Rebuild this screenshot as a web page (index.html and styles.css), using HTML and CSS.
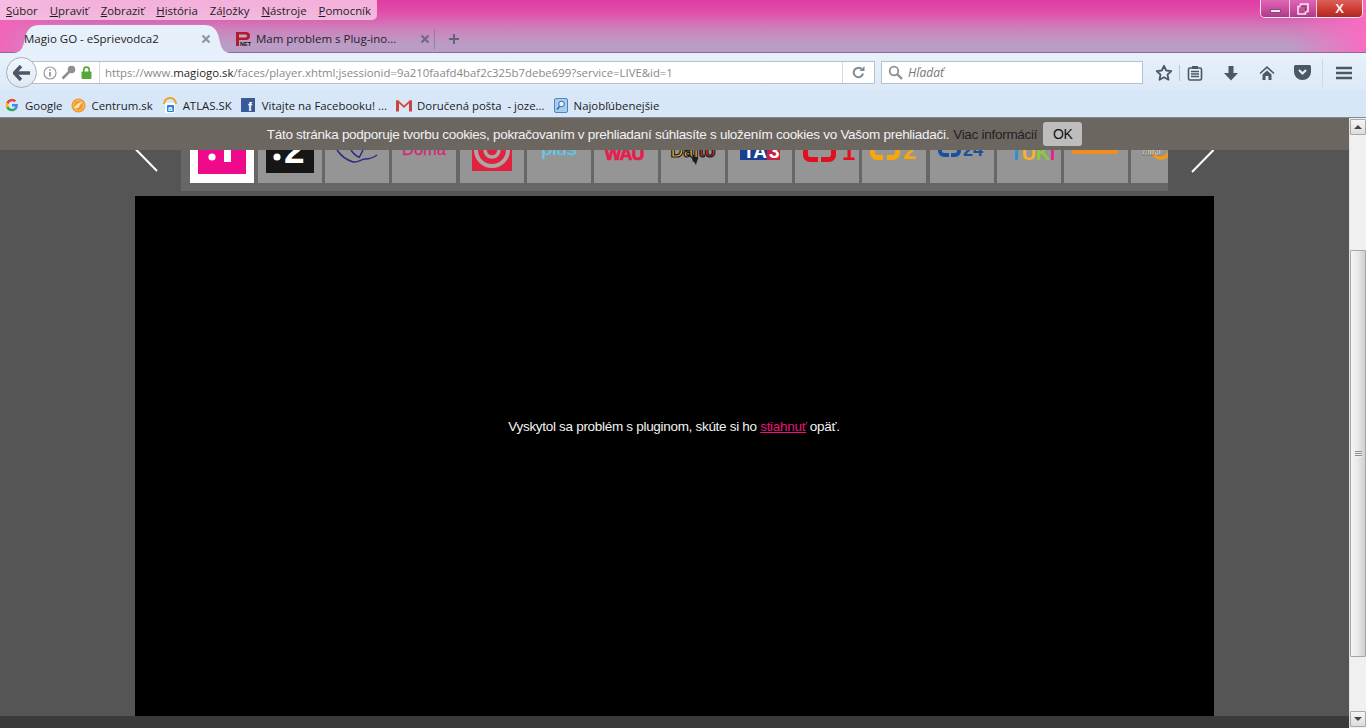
FILE: index.html
```html
<!DOCTYPE html>
<html lang="sk">
<head>
<meta charset="utf-8">
<title>Magio GO - eSprievodca2</title>
<link rel="stylesheet" href="styles.css">
</head>
<body>
<div class="app">
  <header class="chrome">
    <div class="titlebar">
      <div class="menu-row">
        <nav class="menubar">
          <span><u>S</u>úbor</span><span><u>U</u>praviť</span><span><u>Z</u>obraziť</span><span><u>H</u>istória</span><span>Zá<u>l</u>ožky</span><span><u>N</u>ástroje</span><span><u>P</u>omocník</span>
        </nav>
        <div class="winctl">
          <div class="wbtn wmin"><i></i></div>
          <div class="wbtn wmax"><svg width="12" height="12" viewBox="0 0 12 12"><path d="M3.5 1h7.5v7.5H8.5V11H1V3.500h2.500z" fill="none" stroke="#f4e6f0" stroke-width="1.600"/><path d="M3.500 3.500h5v5" fill="none" stroke="#7a3a62"/></svg></div>
          <div class="wbtn wclose">X</div>
        </div>
      </div>
      <div class="tabs">
        <div class="tab tab-active">
          <svg class="tab-shape" width="216" height="28" viewBox="0 0 216 28" preserveAspectRatio="none"><path d="M0 28C8 27 9 22 11 13 13 4 17 0 26 0H190C199 0 203 4 205 13 207 22 208 27 216 28Z" fill="#e6f0fb"/></svg>
          <span class="tab-title">Magio GO - eSprievodca2</span>
          <svg class="tab-x" width="10" height="10" viewBox="0 0 10 10"><path d="M1.500 1.500l7 7M8.500 1.500l-7 7" stroke="#8a97a4" stroke-width="2.200"/></svg>
        </div>
        <div class="tab tab-idle">
          <svg width="16" height="16" viewBox="0 0 16 16"><path d="M1 1h10a4 4 0 0 1 0 8H4v6H1z" fill="#b01c2e"/><path d="M4 3.500h6.500a1.500 1.500 0 0 1 0 3H4z" fill="#c9a2c4"/><text x="5" y="15" class="pnet">NET</text></svg>
          <span class="tab-title">Mam problem s Plug-ino...</span>
          <svg class="tab-x" width="10" height="10" viewBox="0 0 10 10"><path d="M1.500 1.500l7 7M8.500 1.500l-7 7" stroke="#6f6a80" stroke-width="2.200"/></svg>
        </div>
        <span class="tab-sep"></span>
        <svg class="tab-plus" width="12" height="12" viewBox="0 0 12 12"><path d="M6 1v10M1 6h10" stroke="#5c6674" stroke-width="2"/></svg>
      </div>
    </div>

    <div class="navbar">
      <div class="back"><svg width="18" height="16" viewBox="0 0 18 16"><path d="M8 1L1.500 8 8 15M2 8h15" fill="none" stroke="#4c5866" stroke-width="3.400"/></svg></div>
      <div class="urlbar">
        <svg class="u-info" width="14" height="14" viewBox="0 0 14 14"><circle cx="7" cy="7" r="6" fill="none" stroke="#9a9a9a" stroke-width="1.200"/><path d="M7 6v4.500M7 3.200v1.600" stroke="#8a8a8a" stroke-width="1.600"/></svg>
        <svg class="u-key" width="15" height="15" viewBox="0 0 15 15"><circle cx="10.500" cy="4.500" r="3.800" fill="#8f8f8f"/><path d="M8 7L1.500 13.500" stroke="#8f8f8f" stroke-width="2.600"/></svg>
        <svg class="u-lock" width="11" height="13" viewBox="0 0 11 13"><path d="M2.800 6V3.800a2.700 2.700 0 0 1 5.400 0V6" fill="none" stroke="#57a639" stroke-width="1.600"/><rect x="0.500" y="5.500" width="10" height="7.500" rx="1" fill="#57a639"/></svg>
        <span class="u-sep"></span>
        <span class="url">https://www.<b>magiogo.sk</b>/faces/player.xhtml;jsessionid=9a210faafd4baf2c325b7debe699?service=LIVE&amp;id=1</span>
        <span class="u-sep u-sep2"></span>
        <svg class="u-reload" width="13" height="13" viewBox="0 0 13 13"><path d="M11 7.500A4.700 4.700 0 1 1 9.500 3" fill="none" stroke="#7d8994" stroke-width="2"/><path d="M7.500 5h5V0z" fill="#7d8994"/></svg>
      </div>
      <div class="searchbar">
        <svg width="15" height="15" viewBox="0 0 15 15"><circle cx="6" cy="6" r="4.300" fill="none" stroke="#8a8f96" stroke-width="1.800"/><path d="M9 9l5 5" stroke="#8a8f96" stroke-width="2.400"/></svg>
        <span>Hľadať</span>
      </div>
      <div class="tools">
        <svg class="t-star" width="18" height="18" viewBox="0 0 18 18"><path d="M9 1.800l2.200 4.700 5.100.6-3.800 3.500 1 5.100L9 13.200l-4.500 2.500 1-5.100L1.700 7.100l5.100-.6z" fill="none" stroke="#4c5866" stroke-width="1.800" stroke-linejoin="round"/></svg>
        <span class="t-sep"></span>
        <svg class="t-clip" width="16" height="16" viewBox="0 0 16 16"><path d="M5 1h6v3H5z" fill="#4c5866"/><rect x="1.500" y="3" width="13" height="12" rx="1.500" fill="none" stroke="#4c5866" stroke-width="1.600"/><path d="M4 6.500h8M4 9h8M4 11.500h8" stroke="#4c5866" stroke-width="1.400"/></svg>
        <svg class="t-down" width="16" height="16" viewBox="0 0 16 16"><path d="M5.500 1h5v7h4.500L8 15.500 1 8h4.500z" fill="#4c5866"/></svg>
        <svg class="t-home" width="16" height="16" viewBox="0 0 16 16"><path d="M8 1L.500 8l1 1L8 3.200 14.500 9l1-1z" fill="#4c5866"/><path d="M3.500 9.500L8 5.500l4.500 4V15H9.500v-4h-3v4h-3z" fill="#4c5866"/></svg>
        <svg class="t-pocket" width="17" height="15" viewBox="0 0 17 15"><path d="M1.500 0h14A1.500 1.500 0 0 1 17 1.500V7A8.500 8 0 0 1 0 7V1.500A1.500 1.500 0 0 1 1.500 0z" fill="#4c5866"/><path d="M5 5l3.500 3.500L12 5" fill="none" stroke="#e3eefa" stroke-width="2.200"/></svg>
        <span class="t-sep t-sep2"></span>
        <svg class="t-burger" width="18" height="14" viewBox="0 0 18 14"><path d="M1 2h16M1 7h16M1 12h16" stroke="#4c5866" stroke-width="2.400"/></svg>
      </div>
    </div>

    <div class="bookmarks">
      <span class="bm bm-g"><svg width="14" height="14" viewBox="0 0 14 14"><path d="M12.800 7.200c0-.5 0-.9-.1-1.300H7v2.500h3.300a2.800 2.800 0 0 1-1.200 1.800v1.500h2a6 6 0 0 0 1.700-4.500z" fill="#4285f4"/><path d="M7 13.200c1.700 0 3-.6 4.100-1.500l-2-1.500c-.6.400-1.300.6-2.100.6a3.700 3.700 0 0 1-3.500-2.500H1.400v1.600A6.200 6.200 0 0 0 7 13.200z" fill="#34a853"/><path d="M3.500 8.300a3.700 3.700 0 0 1 0-2.400V4.300H1.400a6.200 6.200 0 0 0 0 5.600z" fill="#fbbc05"/><path d="M7 3.300c.9 0 1.700.3 2.400 1l1.800-1.800A6.200 6.200 0 0 0 1.400 4.300l2.100 1.600A3.700 3.700 0 0 1 7 3.300z" fill="#ea4335"/></svg>Google</span>
      <span class="bm bm-c"><svg width="15" height="15" viewBox="0 0 15 15"><circle cx="7.500" cy="7.500" r="7" fill="#ef9a2a"/><circle cx="7.500" cy="7.500" r="5" fill="none" stroke="#f9c67a"/><path d="M3 10c2-4 5-6 9-6-2 1-3 3-4 5-1.500 1.500-3 1.500-5 1z" fill="#fde3b5"/></svg>Centrum.sk</span>
      <span class="bm bm-a"><svg width="16" height="16" viewBox="0 0 16 16"><path d="M2 7a6 6 0 0 1 12 0" fill="none" stroke="#f0a020" stroke-width="2"/><rect x="3" y="6" width="10" height="10" rx="1" fill="#fff"/><rect x="5" y="8" width="7" height="7" rx="1" fill="#2a7fd4"/><text x="6" y="14" class="atl">a</text></svg>ATLAS.SK</span>
      <span class="bm bm-f"><svg width="14" height="14" viewBox="0 0 14 14"><rect width="14" height="14" fill="#3b5998"/><text x="7" y="13" class="fbf">f</text></svg>Vitajte na Facebooku! ...</span>
      <span class="bm bm-m"><svg width="16" height="13" viewBox="0 0 16 13"><path d="M0 1.500h3v11H0zM13 1.500h3v11h-3z" fill="#c9463a"/><path d="M0 1.500h2.500L8 6.500l5.500-5H16L8 9z" fill="#d8493c"/></svg>Doručená pošta&nbsp; - joze...</span>
      <span class="bm bm-s"><svg width="14" height="15" viewBox="0 0 14 15"><rect x=".5" y=".5" width="13" height="14" rx="1.500" fill="#a9cdec" stroke="#4d86bd"/><circle cx="7.500" cy="6" r="2.800" fill="#e7f2fb" stroke="#2f6ba6"/><path d="M5.500 8.500L3 11.500" stroke="#2f6ba6" stroke-width="1.600"/></svg>Najobľúbenejšie</span>
    </div>
  </header>

  <div class="page">
    <main class="viewport">
      <div class="cookie">
        <span class="cookie-text">Táto stránka podporuje tvorbu cookies, pokračovaním v prehliadaní súhlasíte s uložením cookies vo Vašom prehliadači.</span>
        <a class="cookie-more">Viac informácií</a>
        <span class="cookie-ok">OK</span>
      </div>
      <div class="stage">
        <div class="carousel">
          <svg class="arrow" width="46" height="73" viewBox="0 0 46 73"><path d="M-20 10L22 53" stroke="#fff" stroke-width="2" fill="none"/></svg>
          <div class="strip">
            <div class="tile tile-on"><svg viewBox="0 0 64 64"><rect x="8" width="48" height="55" fill="#ee0a8a"/><circle cx="22" cy="38" r="3.600" fill="#fff"/><rect x="34" y="20" width="7" height="23" fill="#fff"/></svg></div>
            <div class="tile"><svg viewBox="0 0 64 64"><rect x="8" width="48" height="54" fill="#161616"/><circle cx="19" cy="38" r="3.600" fill="#fff"/><text x="26" y="44" class="l-two">2</text></svg></div>
            <div class="tile"><svg viewBox="0 0 64 64"><path d="M12 31c4 6 10 10 16 12 6 1 8-3 12-3 4 0 8-1 12-4M26 31c2 3 4 6 8 7M38 31l-4 8" fill="none" stroke="#2f2a86" stroke-width="1.500"/></svg></div>
            <div class="tile"><svg viewBox="0 0 64 64"><text x="32" y="36" class="l-doma">Doma</text></svg></div>
            <div class="tile"><svg viewBox="0 0 64 64"><rect x="12" y="10" width="40" height="42" fill="#e2223c"/><circle cx="32" cy="31" r="16" fill="none" stroke="#aca6a6" stroke-width="4"/><circle cx="32" cy="31" r="7" fill="none" stroke="#aca6a6" stroke-width="3.500"/></svg></div>
            <div class="tile"><svg viewBox="0 0 64 64"><text x="32" y="36" class="l-plus">plus</text></svg></div>
            <div class="tile"><svg viewBox="0 0 64 64"><text x="30" y="41" class="l-wau">WAU</text></svg></div>
            <div class="tile"><svg viewBox="0 0 64 64"><text x="32" y="38" class="l-joj"><tspan class="l-y">Daj</tspan><tspan class="l-r">to</tspan></text><path d="M30 38h7l-2 8z" fill="#1c1c1c"/></svg></div>
            <div class="tile"><svg viewBox="0 0 64 64"><rect x="12" y="20" width="27" height="21" fill="#1b3f8f"/><rect x="39" y="20" width="13" height="21" fill="#c8203f"/><text x="15" y="39" class="l-ta">TA</text><text x="41" y="39" class="l-ta">3</text></svg></div>
            <div class="tile"><svg viewBox="0 0 64 64"><path d="M10.500 24v12a4.500 4.500 0 0 0 4.500 4.500h8M38.500 24v12a4.500 4.500 0 0 1-4.500 4.500h-8" fill="none" stroke="#e2101f" stroke-width="5"/><text x="47" y="41" class="l-ct l-red">1</text></svg></div>
            <div class="tile"><svg viewBox="0 0 64 64"><path d="M10.500 24v10a4.500 4.500 0 0 0 4.500 4.500h6M35.500 24v10a4.500 4.500 0 0 1-4.500 4.500h-6" fill="none" stroke="#f7a70a" stroke-width="5"/><text x="41" y="40" class="l-ct l-or">2</text></svg></div>
            <div class="tile"><svg viewBox="0 0 64 64"><path d="M10 24v8a4 4 0 0 0 4 4h5M29 24v8a4 4 0 0 1-4 4h-4" fill="none" stroke="#1d4f9f" stroke-width="4"/><text x="33" y="37" class="l-ct l-bl l-24">24</text></svg></div>
            <div class="tile"><svg viewBox="0 0 64 64"><text x="13" y="41" class="l-tuki"><tspan fill="#2f8ed8">T</tspan><tspan fill="#f5b52a">U</tspan><tspan fill="#8fc93a">K</tspan><tspan fill="#e6248a">I</tspan></text></svg></div>
            <div class="tile"><svg viewBox="0 0 64 64"><rect x="8" y="27" width="46" height="8" fill="#ee8d23"/></svg></div>
            <div class="tile"><svg viewBox="0 0 64 64"><circle cx="30" cy="30" r="9" fill="none" stroke="#f09a1a" stroke-width="3.500"/><text x="11" y="36" class="l-ninja">MINI</text></svg></div>
          </div>
          <svg class="arrow" width="46" height="73" viewBox="0 0 46 73"><path d="M24 54L66 11" stroke="#fff" stroke-width="2" fill="none"/></svg>
        </div>
        <div class="player">
          <p>Vyskytol sa problém s pluginom, skúte si ho <a>stiahnuť</a> opäť.</p>
        </div>
      </div>
      <div class="foot"></div>
    </main>
    <aside class="scrollbar">
      <div class="sb-btn"><i class="up"></i></div>
      <div class="sb-track">
        <div class="sb-thumb"><span></span></div>
      </div>
      <div class="sb-btn"><i class="down"></i></div>
    </aside>
  </div>
</div>
</body>
</html>
```

FILE: styles.css
```css
* { box-sizing: border-box; }
html, body { margin: 0; padding: 0; height: 100%; overflow: hidden; }
body { font-family: "Open Sans", "Noto Sans", sans-serif; font-size: 12px; color: #222; }
.app { width: 1366px; height: 728px; display: flex; flex-direction: column; }
.chrome { flex: none; height: 118px; display: flex; flex-direction: column; }

.titlebar {
  height: 53px; flex: none; display: flex; flex-direction: column;
  background:
    linear-gradient(90deg, #f265ba 0, rgba(242,101,186,0) 70px, rgba(242,101,186,0) 1290px, #f86cc2 1366px),
    linear-gradient(180deg, #e03ca4 0, #e14ea9 12px, #cf7fbb 28px, #bb9cc5 44px, #b89dc6 52px);
  border-bottom: 1px solid #8e6a8c;
}
.menu-row { height: 25px; flex: none; display: flex; justify-content: space-between; align-items: flex-start; }
.menubar {
  height: 20px; display: flex; gap: 12px; align-items: center; padding: 0 6px;
  background: rgba(250, 220, 240, .72); border-radius: 0 0 5px 0; font-size: 11.4px; color: #1d1d1d;
}
.winctl { display: flex; margin-right: 3px; height: 18px; border: 1px solid #f6e4ef; border-top: 0; border-radius: 0 0 5px 5px; overflow: hidden; }
.wbtn { display: flex; align-items: center; justify-content: center; height: 17px; }
.wmin { width: 29px; background: linear-gradient(#e065b5, #c84a9c 60%, #a83c86); border-right: 1px solid #f0d0e4; }
.wmin i { display: block; width: 11px; height: 4px; margin-top: 4px; background: #f2e6ee; border: 1px solid #8a4a74; }
.wmax { width: 27px; background: linear-gradient(#e065b5, #c84a9c 60%, #a83c86); border-right: 1px solid #f0d0e4; }
.wclose { width: 45px; background: linear-gradient(#d8605c, #d03a30 55%, #a82a26); color: #f4f1f1; font: bold 13px "Liberation Sans", sans-serif; }

.tabs { flex: 1; display: flex; align-items: stretch; padding-left: 14px; font-size: 11.500px; }
.tab { position: relative; display: flex; align-items: center; }
.tab-active { width: 216px; padding-left: 10px; }
.tab-shape { position: absolute; inset: 0 0 -1px 0; }
.tab-active .tab-title { position: relative; width: 177px; color: #222; }
.tab-active .tab-x { position: relative; }
.tab-idle { width: 204px; padding-left: 5px; gap: 5px; color: #27222c; }
.tab-idle .tab-title { width: 159px; }
.tab-sep { width: 1px; height: 20px; margin: 4px 13px 0 0; background: #93809c; }
.tab-plus { align-self: center; }
.tab-x { flex: none; }
.pnet { font: bold 5.500px "Liberation Sans", sans-serif; fill: #111; }

.navbar {
  height: 37px; flex: none; display: flex; align-items: center; padding-left: 6px; padding-top: 2px;
  background: linear-gradient(#e8f1fb, #dce9f7);
}
.back {
  position: relative; z-index: 1; width: 31px; height: 31px; flex: none; border-radius: 50%;
  display: flex; align-items: center; justify-content: center;
  background: linear-gradient(#f3f7fc, #dfe8f2); border: 1px solid #a3b0bf;
}
.urlbar {
  width: 845px; height: 23px; margin-left: -7px; flex: none; display: flex; align-items: center;
  background: #fff; border: 1px solid #b3c0ce; padding-left: 12px; position: relative;
}
.u-key { margin-left: 4px; }
.u-lock { margin-left: 5px; }
.u-sep { width: 1px; height: 21px; background: #d4dae0; margin-left: 7px; margin-right: 5px; flex: none; }
.url { width: 737px; font-size: 11.380px; color: #8a8a8a; white-space: nowrap; }
.url b { color: #1f1f1f; font-weight: 400; }
.u-sep2 { margin: 0; }
.u-reload { margin-left: 9px; }
.searchbar {
  width: 262px; height: 23px; margin-left: 6px; flex: none; display: flex; align-items: center; gap: 5px;
  background: #fff; border: 1px solid #b3c0ce; padding-left: 6px; font-style: italic; font-size: 12px; color: #777;
}
.tools { flex: 1; display: flex; align-items: center; height: 30px; }
.t-star { margin-left: 12px; }
.t-sep { width: 1px; height: 16px; background: #b8c4d0; margin-left: 6px; }
.t-clip { margin-left: 7px; }
.t-down { margin-left: 20px; }
.t-home { margin-left: 20px; }
.t-pocket { margin-left: 19px; }
.t-sep2 { height: 28px; margin-left: 11px; background: #ccd8e4; }
.t-burger { margin-left: 12px; }

.bookmarks {
  height: 28px; flex: none; display: flex; align-items: center; padding: 3px 0 0 5px; gap: 9px;
  background: #d8e7f7; border-bottom: 1px solid #7f8a94; font-size: 11.400px; color: #1d1d1d;
}
.bm { display: flex; align-items: center; gap: 5px; white-space: nowrap; }
.bm-g, .bm-s { gap: 6px; }
.bm-f { gap: 7px; }
.atl { font: bold 8px "Liberation Sans", sans-serif; fill: #fff; }
.fbf { font: bold 12px "Liberation Sans", sans-serif; fill: #fff; }

.page { flex: 1; display: flex; min-height: 0; }
.viewport { flex: 1; position: relative; display: flex; flex-direction: column; background: #555; overflow: hidden; }
.cookie {
  position: absolute; z-index: 2; top: 0; left: 0; right: 0; height: 32px;
  display: flex; align-items: center; justify-content: center; gap: 4px;
  background: #6c6661; font-family: "Liberation Sans", sans-serif; font-size: 13.500px; letter-spacing: -.28px;
}
.cookie-text { color: #f2f2f2; }
.cookie-more { color: #222; }
.cookie-ok {
  margin-left: 2px; width: 39px; height: 24px; display: flex; align-items: center; justify-content: center;
  background: #bdbdbd; border-radius: 3px; color: #111; font-size: 14px; letter-spacing: -.4px;
}
.stage { flex: 1; width: 1079px; margin: 0 auto; display: flex; flex-direction: column; gap: 5px; }
.carousel { height: 73px; flex: none; display: flex; }
.arrow { flex: none; overflow: hidden; }
.strip { flex: 1; min-width: 0; height: 73px; background: #676767; display: flex; gap: 3.150px; padding: 1px 0 0 9px; overflow: hidden; }
.tile { width: 64px; height: 64px; flex: none; background: #959595; overflow: hidden; }
.tile svg { display: block; width: 64px; height: 64px; }
.tile-on { background: #fff; }
.tile-on + .tile { margin-left: 1px; }
.l-two { font: bold 37px "Liberation Sans", sans-serif; fill: #fff; }
.l-doma { font: 16.500px "Liberation Sans", sans-serif; fill: #d4287e; text-anchor: middle; stroke: #d4287e; stroke-width: .3px; }
.l-plus { font: 19px "Liberation Sans", sans-serif; fill: #8ed4c8; text-anchor: middle; stroke: #54b8e8; stroke-width: .7px; }
.l-wau { font: bold 18px "Liberation Sans", sans-serif; fill: #e3204f; text-anchor: middle; letter-spacing: -1px; stroke: #e3204f; stroke-width: .7px; }
.l-joj { font: bold 18px "Liberation Sans", sans-serif; stroke: #1c1c1c; stroke-width: 1.200px; text-anchor: middle; }
.l-y { fill: #f3b43a; }
.l-r { fill: #d9342a; }
.l-ta { font: bold 19px "Liberation Sans", sans-serif; fill: #fff; }
.l-ct { font: bold 24px "Liberation Sans", sans-serif; }
.l-24 { font-size: 18px; }
.l-red { fill: #e2101f; }
.l-or { fill: #f7a70a; }
.l-bl { fill: #1d4f9f; }
.l-tuki { font: bold 20px "Liberation Sans", sans-serif; letter-spacing: -.5px; }
.l-ninja { font: bold 9px "Liberation Sans", sans-serif; fill: #fff; stroke: #222; stroke-width: .3px; }

.player { height: 520px; flex: none; background: #000; display: flex; align-items: center; justify-content: center; }
.player p { margin: 0 0 0 -1px; padding-bottom: 60px; font-family: "Liberation Sans", sans-serif; font-size: 13.500px; letter-spacing: -.3px; color: #f2f2f2; }
.player a { color: #e6147f; text-decoration: underline; }
.foot { height: 12px; flex: none; background: #3a3a3a; }

.scrollbar { width: 17px; flex: none; display: flex; flex-direction: column; padding: 1px 0; background: #f0f0f0; border-left: 1px solid #e2e2e2; }
.sb-btn { height: 16px; flex: none; display: flex; align-items: center; justify-content: center; background: linear-gradient(#f6f6f6, #dcdcdc); border: 1px solid #a9a9a9; border-radius: 1px; }
.sb-btn i { width: 0; height: 0; border: 4px solid transparent; }
.sb-btn .up { border-bottom: 4px solid #444; border-top: 0; }
.sb-btn .down { border-top: 4px solid #444; border-bottom: 0; }
.sb-track { flex: 1; padding-top: 115px; }
.sb-thumb { height: 407px; display: flex; align-items: center; justify-content: center; background: linear-gradient(90deg, #f4f4f4, #e8e8e8 50%, #cfcfd2); border: 1px solid #a6a6a6; border-radius: 1px; }
.sb-thumb span { width: 7px; height: 6px; background: repeating-linear-gradient(#8f8f8f 0 1px, #eee 1px 2px); }
```
